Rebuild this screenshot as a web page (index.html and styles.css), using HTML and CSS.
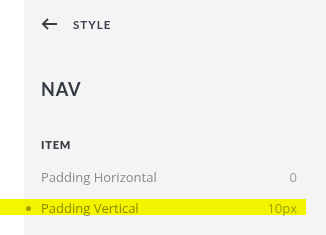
FILE: index.html
```html
<!DOCTYPE html>
<html>
<head>
<meta charset="utf-8">
<link rel="stylesheet" href="styles.css">
</head>
<body>
<div class="app">
  <div class="rail"></div>
  <div class="panel">
    <div class="header">
      <svg class="back" width="17" height="12" viewBox="0 0 17 12">
        <path d="M16 6H2M7 1L1.8 6L7 11" fill="none" stroke="#3a3d44" stroke-width="1.8"/>
      </svg>
      <span class="crumb">STYLE</span>
    </div>
    <h1 class="title">NAV</h1>
    <h2 class="section">ITEM</h2>
    <div class="rows">
      <div class="row">
        <span class="label">Padding Horizontal</span>
        <span class="value">0</span>
      </div>
      <div class="row active">
        <span class="dot"></span>
        <span class="label">Padding Vertical</span>
        <span class="value">10px</span>
        <span class="highlight"></span>
      </div>
    </div>
  </div>
</div>
</body>
</html>
```
FILE: styles.css
```css
html, body {
  margin: 0;
  padding: 0;
  background: #f4f4f4;
}
.app {
  display: flex;
  width: 326px;
  height: 235px;
  overflow: hidden;
}
.rail {
  width: 24px;
  flex: none;
  background: #ffffff;
}
.panel {
  flex: 1;
  background: #f4f4f4;
  padding: 0 29px 0 17px;
  font-family: "Open Sans", sans-serif;
}
.header {
  display: flex;
  align-items: center;
  height: 48px;
}
.back {
  display: block;
  margin-right: 15px;
}
.crumb {
  font-family: "Lato", sans-serif;
  font-weight: 700;
  font-size: 11.5px;
  letter-spacing: 1px;
  color: #3c4150;
}
.title {
  margin: 30px 0 0;
  font-family: "Lato", sans-serif;
  font-weight: 700;
  font-size: 18px;
  line-height: 22px;
  letter-spacing: 0.8px;
  color: #333a44;
}
.section {
  margin: 38px 0 0;
  font-family: "Lato", sans-serif;
  font-weight: 800;
  font-size: 11px;
  line-height: 14px;
  letter-spacing: 0.8px;
  color: #3c3f48;
}
.rows {
  margin-top: 9px;
}
.row {
  position: relative;
  display: flex;
  justify-content: space-between;
  align-items: center;
  height: 31px;
  font-size: 13px;
  color: #8a8a8a;
}
.value {
  color: #9aa0a8;
}
.dot {
  position: absolute;
  left: -15px;
  top: 50%;
  width: 5px;
  height: 5px;
  margin-top: -2px;
  border-radius: 50%;
  background: #a0a0a0;
}
.highlight {
  position: absolute;
  left: -41px;
  right: -9px;
  top: 7px;
  height: 16px;
  background: #f6f600;
  mix-blend-mode: darken;
}
```
